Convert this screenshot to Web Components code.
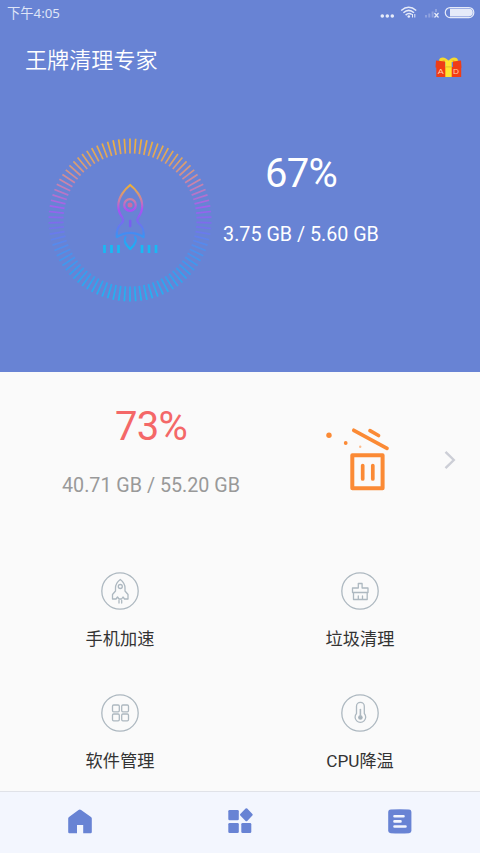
<!DOCTYPE html>
<html lang="zh-CN">
<head>
<meta charset="utf-8">
<title>王牌清理专家</title>
<style>
html,body{margin:0;padding:0}
body{width:480px;height:853px;overflow:hidden;background:#fafafa;font-family:Roboto,"Noto Sans CJK SC",sans-serif}
</style>
</head>
<body>
<cleaner-app></cleaner-app>
<script>
const define = (name, html) => {
  const t = document.createElement('template');
  t.innerHTML = html;
  customElements.define(name, class extends HTMLElement {
    constructor() {
      super();
      this.attachShadow({ mode: 'open' }).append(t.content.cloneNode(true));
    }
  });
};

define('status-bar', `
<style>
:host{display:flex;justify-content:space-between;height:26px;padding:0 5px 0 7px;color:#dfe5f7}
.t{font:13.300px/26px "Noto Sans","Noto Sans CJK SC",sans-serif;white-space:nowrap}
svg{display:block}
</style>
<span class="t"><slot></slot></span>
<svg width="96" height="26" viewBox="379 0 96 26" fill="none" stroke="#e6ebf9">
  <g fill="#e6ebf9" stroke="none"><circle cx="382.3" cy="16" r="1.8"/><circle cx="387.3" cy="16" r="1.8"/><circle cx="392.3" cy="16" r="1.8"/></g>
  <g stroke-width="1.5"><path d="M401.2 10.5Q408.7 4 416.2 10.5"/><path d="M403.4 12.8Q408.7 8 414 12.8"/><path d="M405.6 15.1Q408.7 12.3 411.8 14.5"/></g>
  <circle cx="408.8" cy="16.5" r="1.3" fill="#e6ebf9" stroke="none"/>
  <path d="M412.5 14v3.5M414.8 14v3.5" stroke-width="1"/>
  <g stroke="#8fa2df" stroke-width="2"><path d="M426 17.5v-2.5M429.3 17.5v-4M432.6 17.5v-6M436 12v-3"/></g>
  <path d="M434.5 13l4 4.500M438.500 13l-4 4.500" stroke-width="1.200"/>
  <rect x="445.300" y="7.600" width="28.500" height="10" rx="4.800" stroke-width="1.200"/>
  <path d="M450 8.800h19a3.800 3.800 0 0 1 0 7.600h-19z" fill="#e6ebf9" stroke="none"/>
</svg>`);

define('gift-badge', `
<style>:host{display:block;width:28px;height:23px}svg{display:block}text{font:6.500px "Liberation Sans",sans-serif}</style>
<svg width="28" height="23" viewBox="0 0 28 23">
  <path d="M13.500 5C11 0 4 .5 4 4.500L6 6h15l2-1.500C23 .5 16 0 13.500 5z" fill="#f7d92c"/>
  <path d="M8 4.200l3 .8-4 .5zM19 4.200l-3 .8 4 .5z" fill="#e6a722"/>
  <path d="M1 4.500l9 1v6H.5zM26 4.500l-8 1v6h8.500z" fill="#ef3d16"/>
  <path d="M1.300 11h24.900v10H1.300z" fill="#f23c13"/>
  <path d="M10.300 4.500h6.400V21h-6.400z" fill="#ffe52e"/>
  <path d="M10.300 10.900h6.400" stroke="#d9b52a" stroke-width=".8"/>
  <text x="2.700" y="18" fill="#ffd3ae" textLength="6" lengthAdjust="spacingAndGlyphs">A</text>
  <text x="18" y="18" fill="#ffd3ae" textLength="6" lengthAdjust="spacingAndGlyphs">D</text>
</svg>`);

define('app-title', `
<style>
:host{display:flex;justify-content:space-between;align-items:flex-start;height:94px;padding:0 17px 0 25px;color:#fff}
h1{margin:16px 0 0;font:350 22.100px/32px "Noto Sans CJK SC",sans-serif;color:#fff}
gift-badge{margin-top:30px}
</style><h1><slot></slot></h1><gift-badge></gift-badge>`);

const ticks = Array.from({ length: 90 }, (_, i) => {
  const a = i * Math.PI / 45, s = Math.sin(a), c = Math.cos(a);
  return `M${(82 + 66.5 * s).toFixed(2)} ${(82 - 66.5 * c).toFixed(2)}L${(82 + 81.5 * s).toFixed(2)} ${(82 - 81.5 * c).toFixed(2)}`;
}).join('');

define('boost-ring', `
<style>:host{display:block;width:164px;height:164px}svg{display:block}</style>
<svg width="164" height="164" fill="none">
  <defs>
    <linearGradient id="r" gradientUnits="userSpaceOnUse" x1="0" y1="0" x2="0" y2="164">
      <stop offset="0" stop-color="#edb13c"/><stop offset=".13" stop-color="#dda462"/><stop offset=".28" stop-color="#c982ad"/><stop offset=".42" stop-color="#a060ee"/><stop offset=".52" stop-color="#7c6cec"/><stop offset=".66" stop-color="#528ded"/><stop offset=".82" stop-color="#349fee"/><stop offset="1" stop-color="#20b5f2"/>
    </linearGradient>
    <linearGradient id="k" gradientUnits="userSpaceOnUse" x1="0" y1="46" x2="0" y2="112">
      <stop offset="0" stop-color="#f1b32d"/><stop offset=".13" stop-color="#dd9d66"/><stop offset=".27" stop-color="#c775b5"/><stop offset=".39" stop-color="#ad50f3"/><stop offset=".55" stop-color="#7e67f0"/><stop offset=".75" stop-color="#448cf2"/><stop offset="1" stop-color="#13b9f4"/>
    </linearGradient>
  </defs>
  <path d="${ticks}" stroke="url(#r)" stroke-width="1.700"/>
  <g stroke="url(#k)" stroke-width="2.200" stroke-linecap="round" stroke-linejoin="round">
    <path d="M82.200 47C77 51 70.300 59 70.300 67.500C70.300 73 72 76.500 74 79C76 82 75.500 84 73 86C69.500 89 68.300 92 68.800 99C73.500 96 77 94.800 82.200 94.800C87.400 94.800 91 96 95.600 99C96.100 92 95 89 91.400 86C89 84 88.500 82 90.500 79C92.500 76.500 94.200 73 94.200 67.500C94.200 59 87.400 51 82.200 47z"/>
    <circle cx="82" cy="67" r="5.800"/>
    <path d="M77.500 99C75 103 79 108 82.200 111C85.400 108 90 103 87 99"/>
  </g>
  <circle cx="82" cy="67" r="2.500" fill="#cf6aa7"/>
  <path d="M82.200 83v5" stroke="#795ff0" stroke-width="2.500" stroke-linecap="round"/>
  <path d="M56.500 107v8M63.500 107v8M70.500 107v8M94 107v8M101 107v8M108 107v8" stroke="#18baf4" stroke-width="2.700"/>
</svg>`);

define('usage-figures', `
<style>
:host{display:flex;flex-direction:column;align-items:center;white-space:nowrap}
.p{font-size:40px;line-height:48px;letter-spacing:-.7px;color:var(--pct,#fff)}
.s{font-size:19.700px;line-height:24px;margin-top:var(--gap,23px);color:var(--sub,#fff)}
</style><div class="p"><slot name="percent"></slot></div><div class="s"><slot></slot></div>`);

define('memory-panel', `
<style>
:host{display:block;height:372px;background:#6883d4}
.row{display:flex;align-items:flex-start;padding-left:48px}
boost-ring{margin-top:18px}
usage-figures{width:178px;margin-top:30px;--gap:25px}
</style>
<status-bar>下午4:05</status-bar>
<app-title>王牌清理专家</app-title>
<div class="row"><boost-ring></boost-ring><usage-figures><span slot="percent">67%</span>3.75 GB / 5.60 GB</usage-figures></div>`);

define('storage-row', `
<style>
:host{display:grid;grid-template-columns:302px 110px 1fr;height:186px}
usage-figures{margin-top:31px;--pct:#f46868;--sub:#999;--gap:23px}
svg{display:block}
.bin{margin:50px 0 0 18px}.go{margin:76px 0 0 30px}
</style>
<usage-figures><span slot="percent">73%</span>40.71 GB / 55.20 GB</usage-figures>
<svg class="bin" width="76" height="76" viewBox="320 422 76 76" fill="none" stroke="#fb8a35" stroke-linecap="round" stroke-linejoin="round">
  <circle cx="329" cy="435.300" r="2.700" fill="#fb8a35" stroke="none"/><circle cx="345.700" cy="443" r="1.900" fill="#fb8a35" stroke="none"/><circle cx="360.200" cy="446.700" r="1.200" fill="#fdbb8b" stroke="none"/>
  <path d="M353.800 430.300L387 448.300M370 430.700L378.500 435.500" stroke-width="3.700"/>
  <path d="M352.300 455.300h30.300v33h-30.300z" stroke-width="4"/>
  <path d="M362.700 465.500v13.500M372.800 465.500v13.500" stroke-width="3.700"/>
</svg>
<svg class="go" width="20" height="24" viewBox="442 448 20 24" fill="none" stroke="#ccced6" stroke-width="2.400"><path d="M445.500 451.800l8.300 8.200-8.300 8.200"/></svg>`);

define('tool-tile', `
<style>
:host{display:flex;flex-direction:column;align-items:center;height:122.300px;color:#333}
.i{display:block;width:38px;height:38px;margin-top:14px}
.l{font:400 17.200px/26px Roboto,"Noto Sans CJK SC",sans-serif;margin-top:15.500px;white-space:nowrap}
</style><div class="i"><slot name="icon"></slot></div><div class="l"><slot></slot></div>`);

define('tool-grid', `
<style>
:host{display:grid;grid-template-columns:1fr 1fr;height:233px;overflow:hidden}
svg{display:block;fill:none;stroke:#adb8c0;stroke-width:1.300;stroke-linejoin:round;stroke-linecap:round}
</style>
<tool-tile><svg slot="icon" width="38" height="38"><circle cx="19" cy="19" r="18.200"/><path d="M19.300 7.500C16 10 14.500 12.500 14.500 16V19L11.500 22.500V27H15L16.500 25L18 27H20.600L22 25L23.500 27H27V22.500L24 19V16C24 12.500 22.500 10 19.300 7.500z"/><circle cx="19.300" cy="14.500" r="2"/><path d="M18 28.500v2.500M20.700 28.500v2.500"/></svg>手机加速</tool-tile>
<tool-tile><svg slot="icon" width="38" height="38"><circle cx="19" cy="19" r="18.200"/><path d="M17.300 16V11.500h3.800V16H27v4.500H11.500V16zM12.500 20.500V27.500h13.700v-7M17.300 27v-3M21.500 27v-3"/></svg>垃圾清理</tool-tile>
<tool-tile><svg slot="icon" width="38" height="38"><circle cx="19" cy="19" r="18.200"/><rect x="11.500" y="11" width="6.800" height="6.800" rx="1.200"/><rect x="20.700" y="11" width="6.800" height="6.800" rx="1.200"/><rect x="11.500" y="20" width="6.800" height="6.800" rx="1.200"/><rect x="20.700" y="20" width="6.800" height="6.800" rx="1.200"/></svg>软件管理</tool-tile>
<tool-tile><svg slot="icon" width="38" height="38"><circle cx="19" cy="19" r="18.200"/><path d="M15.500 19.500V12.300a3.900 3.900 0 0 1 7.800 0V19.500a5.300 5.300 0 1 1-7.800 0z"/><circle cx="19.400" cy="23.500" r="2.300" fill="#a7b2ba" stroke="none"/><path d="M19.400 15.500v7" stroke-width="1.600"/></svg>CPU降温</tool-tile>`);

define('bottom-nav', `
<style>
:host{display:grid;grid-template-columns:repeat(3,1fr);justify-items:center;box-sizing:border-box;height:62px;border-top:1px solid #e0e2e8;background:#f3f6fe}
svg{display:block;margin-top:15px;fill:#6883d4}
</style>
<svg width="28" height="28"><path d="M12.500 2.900q1.300-1 2.600 0L25 10q.8.600.8 1.500V25q0 1.200-1.200 1.200H17.200V18H11v8.200H3.400q-1.200 0-1.200-1.200V11.500q0-.9.800-1.500z"/></svg>
<svg width="28" height="28"><rect x="2.300" y="3" width="10.500" height="10.200" rx="1.300"/><rect x="2.300" y="15.900" width="10.500" height="10.200" rx="1.300"/><rect x="15.300" y="15.900" width="10" height="10.200" rx="1.300"/><path d="M19.600 1.600q.8-.7 1.600 0L26.400 7q.8.800 0 1.600l-5.200 5.300q-.8.700-1.600 0L14.300 8.600q-.8-.8 0-1.600z"/></svg>
<svg width="28" height="28"><path d="M4.800 2.600Q14 1.900 23 2.600Q25.200 2.700 25.400 4.800V24Q25.200 26 23 26.200Q14 26.700 4.800 26.200Q2.400 26 2.200 24V4.800Q2.400 2.700 4.800 2.600z"/><path d="M8.500 9.300h9M8.500 14.400h6M8.500 19.500h11" stroke="#f3f6fe" stroke-width="2.600" stroke-linecap="round"/></svg>`);

define('cleaner-app', `
<style>:host{display:flex;flex-direction:column;width:480px;height:853px;background:#fafafa;overflow:hidden}memory-panel,storage-row,tool-grid,bottom-nav{flex:none}</style>
<memory-panel></memory-panel><storage-row></storage-row><tool-grid></tool-grid><bottom-nav></bottom-nav>`);
</script>
</body>
</html>
